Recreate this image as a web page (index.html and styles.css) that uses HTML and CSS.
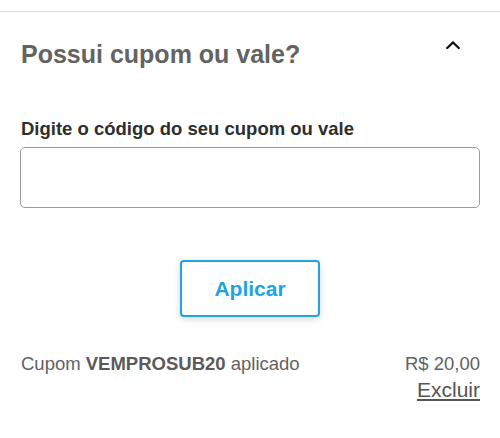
FILE: index.html
```html
<!DOCTYPE html>
<html lang="pt-BR">
<head>
<meta charset="utf-8">
<title>Cupom</title>
<link rel="stylesheet" href="styles.css">
</head>
<body>
<section class="coupon">
  <div class="coupon-header">
    <h2 class="coupon-title">Possui cupom ou vale?</h2>
    <svg class="chevron" width="14" height="8" viewBox="0 0 14 8" aria-hidden="true">
      <polyline points="1.2,7 7,1.4 12.8,7" fill="none" stroke="#111" stroke-width="2.2" stroke-linecap="square"/>
    </svg>
  </div>
  <label class="coupon-label" for="code">Digite o código do seu cupom ou vale</label>
  <input class="coupon-input" id="code" type="text">
  <div class="actions">
    <button class="apply-btn" type="button">Aplicar</button>
  </div>
  <div class="applied">
    <span class="applied-text">Cupom <strong>VEMPROSUB20</strong> aplicado</span>
    <div class="applied-right">
      <span class="amount">R$ 20,00</span>
      <a class="remove" href="#">Excluir</a>
    </div>
  </div>
</section>
</body>
</html>
```
FILE: styles.css
```css
* { box-sizing: border-box; }
body {
  margin: 0;
  font-family: "Liberation Sans", Arial, sans-serif;
  background: #fff;
}
.coupon {
  margin-top: 11px;
  border-top: 1px solid #dcdcdc;
  padding: 0 20px;
}
.coupon-header {
  display: flex;
  justify-content: space-between;
  align-items: flex-start;
  padding-top: 27px;
}
.coupon-title {
  margin: 0 0 0 1px;
  font-size: 25px;
  line-height: 30px;
  font-weight: bold;
  color: #636363;
}
.chevron {
  display: block;
  margin-top: 2px;
  margin-right: 20px;
}
.coupon-label {
  display: block;
  margin: 49px 0 0 1px;
  font-size: 18.5px;
  line-height: 22px;
  font-weight: bold;
  color: #2e2e2e;
}
.coupon-input {
  display: block;
  width: 100%;
  height: 61px;
  margin-top: 7px;
  border: 1px solid #9a9a9a;
  border-radius: 5px;
  background: #fff;
  font: inherit;
  padding: 0 12px;
}
.actions {
  display: flex;
  justify-content: center;
  margin-top: 52px;
}
.apply-btn {
  width: 140px;
  height: 57px;
  border: 2px solid #1ea3e3;
  border-radius: 4px;
  background: #fff;
  color: #1ea3e3;
  font-family: "Liberation Sans", Arial, sans-serif;
  font-size: 21px;
  font-weight: bold;
  box-shadow: 0 2px 7px rgba(0, 0, 0, 0.16);
  padding: 0;
}
.applied {
  display: flex;
  justify-content: space-between;
  align-items: flex-start;
  margin-top: 34px;
  font-size: 18.5px;
  line-height: 26px;
  color: #626262;
}
.applied-text { margin-left: 1px; }
.applied-text strong { color: #5a5a5a; }
.applied-right {
  display: flex;
  flex-direction: column;
  align-items: flex-end;
}
.remove {
  font-size: 21px;
  line-height: 25px;
  color: #555;
  text-decoration: underline;
  text-underline-offset: 2px;
}
```
